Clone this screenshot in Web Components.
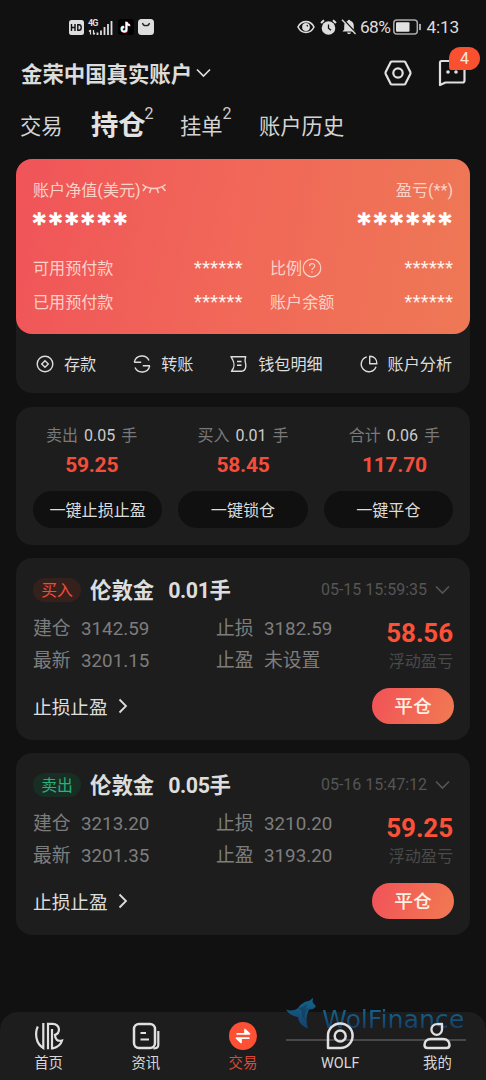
<!DOCTYPE html>
<html lang="zh-CN">
<head>
<meta charset="utf-8">
<meta name="viewport" content="width=device-width">
<title>持仓</title>
<style>
html,body{margin:0;background:#111;}
body{width:486px;height:1080px;overflow:hidden;font-family:Roboto,"Noto Sans CJK SC",sans-serif;color:#dcdcdc}
</style>
</head>
<body>
<trade-app></trade-app>
<script>
const ICONS={
hd:[15,15,'<rect width="15" height="15" rx="2.5" fill="#dedede"/><path d="M2.5 4v7M2.5 7.5h3.5M6 4v7M8.8 4.7v5.6h1.4c2.7 0 2.7-5.6 0-5.6z" fill="none" stroke="#111" stroke-width="1.4"/>'],
signal:[26,17,'<path d="M2.500 11v4.500M1 12.500L2.500 11M5.500 11v4.500M7 14l-1.500 1.500" stroke="#ddd" stroke-width="1.200" fill="none"/><path d="M9.500 13.500v2.500M13 11.500v4.500M16.500 8v8M20 5v11M23.500 2v14" stroke="#ddd" stroke-width="1.800"/>'],
tiktok:[16,16,'<rect width="16" height="16" rx="3" fill="#000"/><path d="M8.500 3v7.200a2.400 2.400 0 1 1-2.400-2.400M8.500 3c.3 2 1.600 3 3.400 3.100" fill="none" stroke="#45dcd8" stroke-width="1.700" transform="translate(-.5 -.4)"/><path d="M8.500 3v7.200a2.400 2.400 0 1 1-2.400-2.400M8.500 3c.3 2 1.600 3 3.400 3.100" fill="none" stroke="#e94868" stroke-width="1.700" transform="translate(.6 .5)"/><path d="M8.500 3v7.200a2.400 2.400 0 1 1-2.400-2.400M8.500 3c.3 2 1.600 3 3.400 3.100" fill="none" stroke="#fff" stroke-width="1.700"/>'],
bag:[16,16,'<rect width="16" height="16" rx="3.500" fill="#dedede"/><path d="M4.500 4c.8 3.600 6.200 3.600 7 0" fill="none" stroke="#222" stroke-width="1.200"/>'],
eye:[18,14,'<path d="M1 7C4.500-.2 13.500-.2 17 7 13.500 14.200 4.500 14.200 1 7z" fill="none" stroke="#ddd" stroke-width="1.600"/><circle cx="9" cy="7" r="3.900" fill="#ddd"/><path d="M9 5.800l2-1v2z" fill="#111"/>'],
alarm:[17,16,'<circle cx="8.500" cy="9" r="6.800" fill="#ddd"/><path d="M1 4l3-2.700M16 4l-3-2.700" stroke="#ddd" stroke-width="2"/><path d="M8.500 5.500v3.800l2.500 2" fill="none" stroke="#111" stroke-width="1.300"/>'],
bell:[16,16,'<path d="M1.500 12.500l1.700-2V7c0-2.800 1.500-4.700 3.600-5.200C7 .5 9 .5 9.300 1.800c2.200.6 3.500 2.500 3.500 5.200v3.500l1.700 2zM6 13.500h4c-.6 2-3.400 2-4 0z" fill="#ddd"/><path d="M2.500.5L15 14" stroke="#111" stroke-width="1.600"/><path d="M1 .8L14.500 15" stroke="#ddd" stroke-width="1.300"/>'],
battery:[29,16,'<rect x=".8" y="1" width="23.500" height="14" rx="3" fill="none" stroke="#aaa" stroke-width="1.500"/><rect x="3" y="3.200" width="13.500" height="9.600" rx="1" fill="#e2e2e2"/><path d="M27 5.500v5" stroke="#ccc" stroke-width="1.600" stroke-linecap="round"/>'],
down:[15,10,'<path d="M1 1.500l6.500 6.500L14 1.500" fill="none" stroke="currentColor" stroke-width="1.700"/>'],
right:[10,16,'<path d="M1.500 1.500L8 8l-6.500 6.500" fill="none" stroke="currentColor" stroke-width="1.800"/>'],
hex:[28,26,'<path d="M8 1.500h12q1 0 1.500.9L26.300 12q.4 1 0 2L21.500 23.600q-.5.9-1.500.9H8q-1 0-1.500-.9L1.700 14q-.4-1 0-2L6.500 2.400Q7 1.500 8 1.500z" fill="none" stroke="#e0e0e0" stroke-width="2.200"/><circle cx="14" cy="13" r="4.700" fill="none" stroke="#e0e0e0" stroke-width="2.200"/>'],
chat:[28,28,'<path d="M3.500 2h21q2 0 2 2v17.500q0 2-2 2H7.500L2 26V4q0-2 1.500-2z" fill="none" stroke="#e0e0e0" stroke-width="2.200" stroke-linejoin="round"/><circle cx="10" cy="13" r="1.800" fill="#e0e0e0"/><circle cx="18" cy="13" r="1.800" fill="#e0e0e0"/>'],
lashes:[26,12,'<path d="M1.500 1.500c6 5.300 17 5.300 23 0M5 4L2 8M10 5.700L8.500 10M16 5.700l1.500 4.300M21 4l3.500 4" fill="none" stroke="currentColor" stroke-width="1.500"/>'],
help:[20,20,'<circle cx="10" cy="10" r="8.800" fill="none" stroke="currentColor" stroke-width="1.200"/><path d="M7.500 8.200c0-3.600 5.200-3.400 5.200-.3 0 2-2.700 2-2.700 4.200M10 13.300v1.500" fill="none" stroke="currentColor" stroke-width="1.200"/>'],
deposit:[18,18,'<circle cx="9" cy="9" r="7.800" fill="none" stroke="currentColor" stroke-width="1.400"/><path d="M9 5.700L12.300 9 9 12.300 5.700 9z" fill="none" stroke="currentColor" stroke-width="1.400"/>'],
transfer:[18,18,'<path d="M1.300 7.200A7.800 7.800 0 0 1 16 5.500M1 7.200h7.200M16.700 10.800A7.800 7.800 0 0 1 2 12.500M17 10.800H9.800" fill="none" stroke="currentColor" stroke-width="1.400"/>'],
wallet:[18,18,'<path d="M1 1.700h14.700c-2 5 1 6.500 0 10.500-.5 2.500-1.500 4-4 4H1.500c3-3.500 3-8.200 1.300-11.200zM7 6.500h4.500M7 10.300h4.500" fill="none" stroke="currentColor" stroke-width="1.400" stroke-linejoin="round"/>'],
pie:[18,18,'<path d="M6.800 1.800A7.600 7.600 0 1 0 16 11.700" fill="none" stroke="currentColor" stroke-width="1.400"/><path d="M9.700 1.200v7.500h7.200C16.900 4.300 14 1.200 9.700 1.200z" fill="none" stroke="currentColor" stroke-width="1.400" stroke-linejoin="round"/>'],
home:[28,28,'<path d="M2.800 4.500C-.2 11 .5 21.500 8.300 26V1" fill="none" stroke="#e0e0e0" stroke-width="2.200"/><path d="M13 .8v26.500M17 27.500V7M13 1.800h4.500c7.800.4 8.800 9.500 1.500 11.500M20 13c0 4.500 2.500 6.500 7 5.500-1 3.800-3.800 6.500-9.500 8" fill="none" stroke="#e0e0e0" stroke-width="2.200"/>'],
news:[28,28,'<rect x="2" y="2" width="21" height="24" rx="5" fill="none" stroke="#e0e0e0" stroke-width="2.500"/><path d="M8.500 11h5.500M8.500 17.500h8.500" stroke="#e0e0e0" stroke-width="2.200"/><path d="M26.300 9v14q0 3.500-5 3.500" fill="none" stroke="#e0e0e0" stroke-width="2.200"/>'],
trade:[28,28,'<circle cx="14" cy="14" r="14" fill="#fd5035"/><path d="M7.500 11.800h13L16 7.500v4.300M20.500 16.200h-13l4.500 4.300v-4.300" fill="#fff" stroke="#fff" stroke-width="1.700" stroke-linejoin="round"/>'],
wolf:[28,28,'<path d="M2 26V14A12.300 12.300 0 1 1 14.300 26z" fill="none" stroke="#e0e0e0" stroke-width="2.500" stroke-linejoin="round"/><circle cx="14.200" cy="14" r="5.500" fill="none" stroke="#e0e0e0" stroke-width="2.500"/>'],
me:[28,28,'<path d="M19 2v5.500a5.300 5.300 0 1 1-5.300-5.300z" fill="none" stroke="#e0e0e0" stroke-width="2.300" stroke-linejoin="round"/><path d="M8 17h12c4.500 0 6.500 3 6.500 6q0 3-3 3H4.500q-3 0-3-3C1.500 20 3.500 17 8 17z" fill="none" stroke="#e0e0e0" stroke-width="2.500" stroke-linejoin="round"/>'],
logo:[30,31,'<defs><linearGradient id="g" x2="0" y2="1"><stop stop-color="#12658c"/><stop offset="1" stop-color="#173f6b"/></linearGradient></defs><path d="M0 11.500c4 1.500 8 1.500 12-1.500 3-4 6-6.500 11-7l4-3-.5 4 3.500 4.500-3 2.500-4 .5c-2.500 5-3.500 11-1 19-6-2-9.500-6.500-10-11.500C8 18.500 3 16.500 0 11.500z" fill="url(#g)"/><path d="M12 10c4 0 7-2 10-5l-3 6 4-1c-4 3-5.500 7-3.500 13-3-3-4.500-6-3.500-10z" fill="#10304a" opacity=".45"/>']
};
function define(name,css,html){
  customElements.define(name,class extends HTMLElement{
    constructor(){super();this.attachShadow({mode:'open'})}
    connectedCallback(){
      const body=typeof html==='function'?html(k=>this.getAttribute(k)||''):html;
      this.shadowRoot.innerHTML='<style>:host{display:block;box-sizing:border-box}*{box-sizing:border-box}'+css+'</style>'+body;
    }
  });
}
define('ui-icon',':host{display:block;flex:none}svg{display:block;overflow:visible}',a=>{
  const [w,h,p]=ICONS[a('name')];return `<svg width="${w}" height="${h}" viewBox="0 0 ${w} ${h}">${p}</svg>`});

define('status-bar',`:host{display:flex;align-items:center;height:54px;padding:0 27px 0 69px;font-size:17.3px;line-height:20px;color:#ddd}
.net{position:relative;margin:0 4px 0 4px}.g{position:absolute;left:0;top:-1px;font:700 9px/10px Roboto,sans-serif;letter-spacing:-.8px}
.tt{margin-right:4px}.sp{flex:1}.pct{margin:0 3px 0 4px;letter-spacing:-.5px}`,
`<ui-icon name="hd"></ui-icon><div class="net"><ui-icon name="signal"></ui-icon><span class="g">4G</span></div><ui-icon class="tt" name="tiktok"></ui-icon><ui-icon name="bag"></ui-icon><span class="sp"></span>
<ui-icon name="eye"></ui-icon><ui-icon name="alarm" style="margin:0 4px 0 5px"></ui-icon><ui-icon name="bell"></ui-icon><span class="pct" style="margin-left:3px">68%</span><ui-icon name="battery"></ui-icon><span style="margin-left:4px;letter-spacing:-.2px">4:13</span>`);

define('account-bar',`:host{display:flex;align-items:center;height:38px;padding:0 20px 0 21px}
.n{font-size:21.4px;font-weight:700;line-height:30px;margin-right:4px;padding-top:3px}.sp{flex:1}
.m{position:relative;margin-left:26px}.b{position:absolute;left:11px;top:-12px;width:31px;height:23px;border-radius:12px 12px 12px 3px;background:#f9502f;color:#ffe5dc;font-size:16px;line-height:23px;text-align:center}`,
`<span class="n">金荣中国真实账户</span><ui-icon name="down"></ui-icon><span class="sp"></span><ui-icon name="hex"></ui-icon><div class="m"><ui-icon name="chat"></ui-icon><span class="b">4</span></div>`);

define('tab-item',`:host{display:flex;font-size:21.3px;line-height:43px;color:#d4d4d4}:host([active]){font-size:27.3px;font-weight:700;color:#e2e2e2}
sup{font-size:16px;font-weight:400;line-height:18px;margin:0 0 0 -1px;width:9px;color:#ccc}:host(:not([active])) sup{margin-left:0}`,
a=>`<slot></slot>${a('count')?`<sup>${a('count')}</sup>`:''}`);
define('tab-strip',`:host{display:flex;height:40px;margin-top:13px;padding-left:20px}`,`<slot></slot>`);

define('metric-row',`:host{display:grid;grid-template-columns:161px 49px 27px 1fr auto;align-items:center;height:34px;font-size:16.1px;line-height:24px;color:#fbd2c8}
.v{color:#fff0e9;font-size:18px;letter-spacing:.38px;margin-right:-.38px;line-height:20px;margin-top:-2px;white-space:nowrap}
.l{display:flex;align-items:center;grid-column:4}`,
a=>`<span>${a('a')}</span><span class="v">******</span><span class="l">${a('b')}${a('help')?'<ui-icon name="help" style="margin-top:-2px"></ui-icon>':''}</span><span class="v">******</span>`);

define('balance-card',`:host{height:234px;margin:14px 16px 0;background:#1d1d1d;border-radius:16px}
.c{height:175px;padding:18px 17px 0;border-radius:16px;background:linear-gradient(100deg,#f05459,#f16858 50%,#ee7855)}
.h{display:flex;align-items:center;height:24px;font-size:16.1px;color:#fbd2c8}.sp{flex:1}
.s{display:flex;justify-content:space-between;height:30px;margin:2px -2px 19px 0;font:400 25px/30px "DejaVu Sans",sans-serif;letter-spacing:3.7px;color:#fff;padding-top:5px;-webkit-text-stroke:1.5px #fff}
.a{display:flex;justify-content:space-between;align-items:center;height:60px;padding:0 18px 0 20px}`,
`<div class="c"><div class="h"><span>账户净值(美元)</span><ui-icon name="lashes"></ui-icon><span class="sp"></span><span>盈亏(**)</span></div>
<div class="s"><span>******</span><span>******</span></div>
<metric-row a="可用预付款" b="比例" help="1"></metric-row><metric-row a="已用预付款" b="账户余额"></metric-row></div>
<div class="a"><quick-action icon="deposit">存款</quick-action><quick-action icon="transfer">转账</quick-action><quick-action icon="wallet">钱包明细</quick-action><quick-action icon="pie">账户分析</quick-action></div>`);
define('quick-action',`:host{display:flex;align-items:center;gap:10px;font-size:16.1px;line-height:24px;color:#ddd}span{padding-top:2px}`,a=>`<ui-icon name="${a('icon')}"></ui-icon><span><slot></slot></span>`);

define('lot-total',`:host{flex:1;text-align:center}.t{font-size:16px;line-height:24px;color:#797979;word-spacing:2px}.t b{font-weight:400;color:#ccc}
.v{font-size:21px;font-weight:700;line-height:28px;color:#f44e3b;margin-top:3px;letter-spacing:-.25px}`,
a=>`<div class="t">${a('side')} <b>${a('lots')}</b> 手</div><div class="v">${a('value')}</div>`);
define('pill-button',`:host{flex:1;height:37px;border-radius:19px;background:#101010;color:#ddd;font-size:16.1px;line-height:40px;text-align:center}`,`<slot></slot>`);
define('summary-card',`:host{height:138px;margin:14px 16px 0;background:#1d1d1d;border-radius:16px;padding-top:17px}.r{display:flex}.b{display:flex;gap:16px;padding:0 17px;margin-top:12px}`,
`<div class="r"><lot-total side="卖出" lots="0.05" value="59.25"></lot-total><lot-total side="买入" lots="0.01" value="58.45"></lot-total><lot-total side="合计" lots="0.06" value="117.70"></lot-total></div>
<div class="b"><pill-button>一键止损止盈</pill-button><pill-button>一键锁仓</pill-button><pill-button>一键平仓</pill-button></div>`);

define('position-card',`:host{height:182px;margin:13px 16px 0;background:#1d1d1d;border-radius:16px;padding:16px 16px 0 17px}
.h{display:flex;align-items:center;height:31px}.tag{width:48px;height:24px;border-radius:12px;background:#35201c;color:#ef4c38;font-size:15.8px;line-height:25px;text-align:center}
.tag.sell{background:#182e24;color:#27b277}.n{font-size:21.4px;font-weight:700;line-height:30px;margin-left:9px;color:#ddd;padding-top:2px}.q{margin-left:14px;letter-spacing:-.4px}
.sp{flex:1}.time{font-size:16px;line-height:22px;color:#555;display:flex;align-items:center;margin:1px 4px 0 0}.time ui-icon{margin-left:8px}
.d{display:flex;margin-top:8px}.g{display:grid;grid-template-columns:48px 135px 48px 80px;grid-auto-rows:32px;font-size:18.8px;line-height:33px;color:#7d7d7d}
.p{flex:1;text-align:right;padding-right:1px}.pv{font-size:26px;font-weight:700;line-height:32px;padding-top:4px;color:#fb5137;letter-spacing:-.1px}.pl{font-size:16.1px;line-height:24px;color:#4a4a4a;margin-top:1px}
.f{display:flex;align-items:center;height:36px;margin-top:11px;font-size:18.7px;color:#ddd;line-height:28px}.f span:first-child{padding-top:3px}.f ui-icon{margin-left:10px}
.c{width:82px;height:36px;border-radius:18px;background:linear-gradient(110deg,#f15258,#f17a52);color:#fff0e6;text-align:center;line-height:38px;font-weight:500}`,
a=>`<div class="h"><span class="tag ${a('side')=='卖出'?'sell':''}">${a('side')}</span><span class="n">伦敦金</span><span class="n q">${a('lots')}手</span><span class="sp"></span><span class="time">${a('time')}<ui-icon name="down"></ui-icon></span></div>
<div class="d"><div class="g"><span>建仓</span><span>${a('open')}</span><span>止损</span><span>${a('sl')}</span><span>最新</span><span>${a('last')}</span><span>止盈</span><span>${a('tp')}</span></div><div class="p"><div class="pv">${a('pnl')}</div><div class="pl">浮动盈亏</div></div></div>
<div class="f"><span>止损止盈</span><ui-icon name="right"></ui-icon><span class="sp"></span><span class="c">平仓</span></div>`);

define('nav-item',`:host{flex:1;display:flex;flex-direction:column;align-items:center;font-size:14.4px;line-height:20px;color:#d8d8d8;z-index:1}:host([active]){color:#d94b37}ui-icon{margin:10px 0 4px}`,a=>`<ui-icon name="${a('icon')}"></ui-icon><slot></slot>`);
define('brand-mark',`:host{position:absolute;left:286px;top:-14px;width:180px;height:43px;border-bottom:2px solid #484848;display:flex}
span{font:25.2px/36px "DejaVu Sans",sans-serif;margin:4px 0 0 6px;height:36px;white-space:nowrap;background:linear-gradient(#12618a 30%,#173660 80%);background-clip:text;-webkit-background-clip:text;color:transparent}`,`<ui-icon name="logo"></ui-icon><span>WolFinance</span>`);
define('nav-bar',`:host{position:relative;display:flex;height:68px;background:#1d1d1d;border-radius:18px 18px 0 0}`,
`<brand-mark></brand-mark><nav-item icon="home">首页</nav-item><nav-item icon="news">资讯</nav-item><nav-item icon="trade" active>交易</nav-item><nav-item icon="wolf">WOLF</nav-item><nav-item icon="me">我的</nav-item>`);

define('trade-app',`:host{display:flex;flex-direction:column;height:1080px;width:486px;background:#111}.sp{flex:1}`,
`<status-bar></status-bar><account-bar></account-bar>
<tab-strip><tab-item style="width:71px">交易</tab-item><tab-item active count="2" style="width:89px">持仓</tab-item><tab-item count="2" style="width:79px">挂单</tab-item><tab-item>账户历史</tab-item></tab-strip>
<balance-card></balance-card><summary-card></summary-card>
<position-card side="买入" lots="0.01" time="05-15 15:59:35" open="3142.59" sl="3182.59" last="3201.15" tp="未设置" pnl="58.56"></position-card>
<position-card side="卖出" lots="0.05" time="05-16 15:47:12" open="3213.20" sl="3210.20" last="3201.35" tp="3193.20" pnl="59.25"></position-card>
<span class="sp"></span><nav-bar></nav-bar>`);
</script>
</body>
</html>
